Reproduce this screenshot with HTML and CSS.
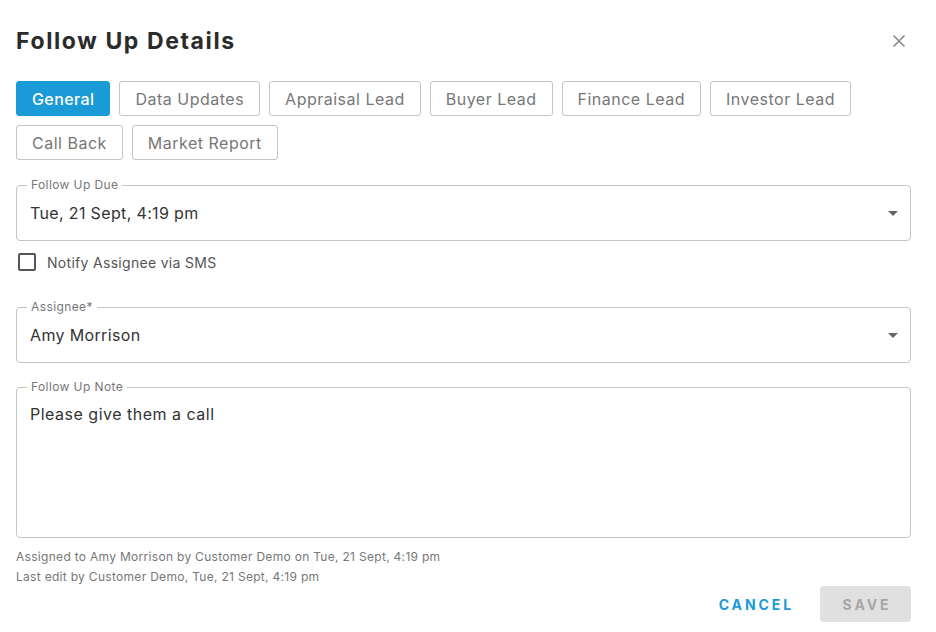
FILE: index.html
```html
<!DOCTYPE html>
<html lang="en">
<head>
    <meta charset="UTF-8">
    <meta name="viewport" content="width=device-width, initial-scale=1.0">
    <title>Follow Up Details</title>
    <link rel="stylesheet" href="styles.css">
</head>
<body>

    <div class="dialog">
        <!-- Cabecalho -->
        <div class="header">
            <h2>Follow Up Details</h2>
            <button class="close" type="button" aria-label="Close">
                <svg width="14" height="14" viewBox="0 0 14 14">
                    <path d="M1.5 1.5 L12.5 12.5 M12.5 1.5 L1.5 12.5" stroke="#8a8a8a" stroke-width="1.6" fill="none"/>
                </svg>
            </button>
        </div>

        <!-- Abas -->
        <div class="tabs">
            <button class="tab active" type="button">General</button>
            <button class="tab" type="button">Data Updates</button>
            <button class="tab" type="button">Appraisal Lead</button>
            <button class="tab" type="button">Buyer Lead</button>
            <button class="tab" type="button">Finance Lead</button>
            <button class="tab" type="button">Investor Lead</button>
            <button class="tab" type="button">Call Back</button>
            <button class="tab" type="button">Market Report</button>
        </div>

        <div class="field first">
            <span class="field-label">Follow Up Due</span>
            <span class="field-value">Tue, 21 Sept, 4:19 pm</span>
            <span class="caret"></span>
        </div>

        <label class="check">
            <span class="box"></span>
            Notify Assignee via SMS
        </label>

        <div class="field assignee">
            <span class="field-label">Assignee*</span>
            <span class="field-value">Amy Morrison</span>
            <span class="caret"></span>
        </div>

        <div class="field note">
            <span class="field-label">Follow Up Note</span>
            <span class="field-value">Please give them a call</span>
        </div>

        <div class="meta">
            <p>Assigned to Amy Morrison by Customer Demo on Tue, 21 Sept, 4:19 pm</p>
            <p>Last edit by Customer Demo, Tue, 21 Sept, 4:19 pm</p>
        </div>

        <div class="actions">
            <button class="cancel" type="button">Cancel</button>
            <button class="save" type="button" disabled>Save</button>
        </div>
    </div>

</body>
</html>
```

FILE: styles.css
```css
body {
    font-family: 'Inter', 'Noto Sans', sans-serif;
    margin: 0;
    background: white;
    color: #333;
}

.dialog {
    padding: 24px 25px 0 16px;
}

.header {
    display: flex;
    align-items: center;
    justify-content: space-between;
    height: 34px;
}

.header h2 {
    margin: 0;
    font-size: 23px;
    font-weight: 700;
    color: #2b2b2b;
    letter-spacing: 1.6px;
}

.close {
    background: none;
    border: none;
    padding: 0;
    margin-right: -3px;
    width: 30px;
    height: 30px;
    display: flex;
    align-items: center;
    justify-content: center;
    cursor: pointer;
}

.tabs {
    display: flex;
    flex-wrap: wrap;
    gap: 9px;
    margin-top: 23px;
    max-width: 860px;
}

.tab {
    font-family: inherit;
    font-size: 16px;
    letter-spacing: 0.5px;
    color: #777;
    background: white;
    border: 1px solid #c4c4c4;
    border-radius: 3px;
    height: 35px;
    padding: 0 15px;
    cursor: pointer;
}

.tab.active {
    background: #1a9ad6;
    border-color: #1a9ad6;
    color: white;
    font-weight: 500;
    letter-spacing: 0.4px;
}

.field {
    position: relative;
    display: flex;
    align-items: center;
    height: 54px;
    border: 1px solid #c4c4c4;
    border-radius: 4px;
    padding: 0 12px 0 13px;
    margin-top: 24px;
}

.field.first {
    margin-top: 25px;
}

.field.assignee {
    margin-top: 35px;
}

.field-label {
    position: absolute;
    top: -8px;
    left: 10px;
    padding: 0 4px;
    background: white;
    font-size: 12px;
    line-height: 14px;
    letter-spacing: 0.4px;
    color: #777;
}

.field-value {
    flex: 1;
    font-size: 16px;
    letter-spacing: 0.35px;
    color: #333;
}

.caret {
    width: 0;
    height: 0;
    border-left: 5px solid transparent;
    border-right: 5px solid transparent;
    border-top: 5px solid #666;
}

.check {
    display: flex;
    align-items: center;
    gap: 11px;
    margin-top: 11px;
    padding-left: 2px;
    height: 20px;
    font-size: 14px;
    letter-spacing: 0.3px;
    color: #555;
}

.box {
    width: 14px;
    height: 14px;
    border: 2px solid #555;
    border-radius: 2px;
}

.field.note {
    align-items: flex-start;
    padding-top: 16px;
    box-sizing: border-box;
    height: 151px;
}

.field.note .field-value {
    letter-spacing: 0.5px;
}

.meta {
    margin-top: 9px;
}

.meta p {
    margin: 0;
    font-size: 12px;
    line-height: 20px;
    letter-spacing: 0.3px;
    color: #777;
}

.actions {
    display: flex;
    justify-content: flex-end;
    align-items: center;
    gap: 8px;
    margin-top: -1px;
}

.actions button {
    font-family: inherit;
    font-size: 14px;
    font-weight: 700;
    letter-spacing: 2.9px;
    text-transform: uppercase;
    border: none;
    border-radius: 4px;
    height: 36px;
    cursor: pointer;
}

.cancel {
    background: none;
    color: #1a9ad6;
    padding: 0 18px 0 16px;
}

.save {
    background: #e0e0e0;
    color: #a6a6a6;
    width: 91px;
    padding: 0 0 0 3px;
}
```
